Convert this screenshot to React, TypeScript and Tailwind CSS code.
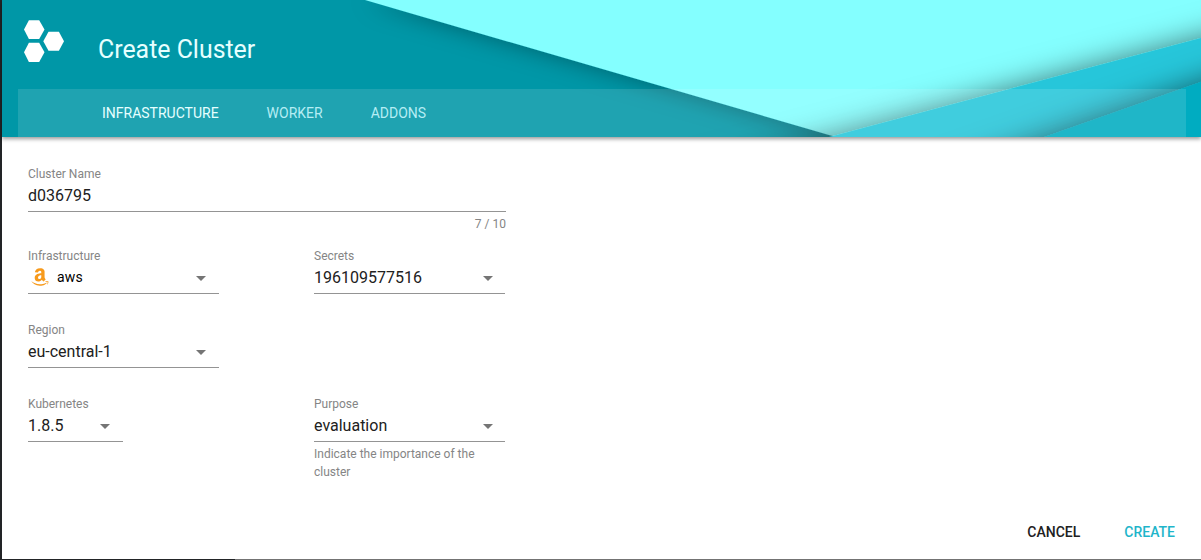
import React from "react";
import { FaAmazon } from "react-icons/fa";

function HeaderArt() {
  return (
    <svg className="absolute inset-0 h-full w-full" viewBox="2 0 1199 137" preserveAspectRatio="none" aria-hidden="true">
      <defs>
        <filter id="shade" filterUnits="userSpaceOnUse" x="200" y="-80" width="1300" height="440">
          <feDropShadow dx="0" dy="0" stdDeviation="15" floodColor="#000" floodOpacity="0.52" />
        </filter>
        <filter id="shadeSoft" filterUnits="userSpaceOnUse" x="200" y="-80" width="1300" height="440">
          <feDropShadow dx="0" dy="0" stdDeviation="12" floodColor="#000" floodOpacity="0.36" />
        </filter>
      </defs>
      <rect x="0" y="0" width="1201" height="137" fill="#0097a7" />
      <polygon points="365,0 1400,0 1400,301 1400,301" fill="#84ffff" filter="url(#shadeSoft)" />
      <polygon points="529,217 1400,-15 1400,300 529,300" fill="#26c6da" filter="url(#shade)" />
      <polygon points="843,208 1400,12 1400,300 843,300" fill="#00acc1" filter="url(#shade)" />
    </svg>
  );
}

function Logo() {
  return (
    <svg className="mt-5 ml-[22px] h-[43px] w-[41px] shrink-0" viewBox="0 0 41 43" fill="#fff" aria-hidden="true">
      <polygon points="4.9,0.2 15.2,0.2 20.5,9.6 15.2,19 4.9,19 0,9.6" />
      <polygon points="4.9,22.8 15.2,22.8 20.5,32.3 15.2,42 4.9,42 0,32.3" />
      <polygon points="24.5,11.7 34.9,11.7 40,21.2 34.9,30.8 24.5,30.8 19.3,21.2" />
    </svg>
  );
}

type FieldProps = {
  label: string;
  width: string;
  children: React.ReactNode;
  select?: boolean;
  caretMargin?: string;
};

function Field({ label, width, children, select = true, caretMargin = "mr-[13px]" }: FieldProps) {
  return (
    <div className={width}>
      <div className="h-[18px] text-[12px] leading-[18px] text-[#858585]">{label}</div>
      <div className="flex h-[29px] items-start justify-between border-b border-[#949494] text-[16px] leading-[26px] text-[#212121]">
        <span className="flex items-center">{children}</span>
        {select && (
          <svg className={`mt-[11px] h-[5px] w-[10px] ${caretMargin}`} viewBox="0 0 10 5" aria-hidden="true">
            <path d="M0 0h10L5 5z" fill="#757575" />
          </svg>
        )}
      </div>
    </div>
  );
}

export default function App() {
  return (
    <div className="flex h-[560px] w-[1201px] flex-col overflow-hidden bg-[#222426] pl-[2px] font-['Roboto',sans-serif]">
      <div className="flex h-[559px] flex-col bg-white">
        <header className="relative h-[137px] shrink-0 shadow-[0_2px_4px_rgba(0,0,0,0.4)]">
          <HeaderArt />
          <div className="relative flex h-full flex-col">
            <div className="flex h-[89px] items-start">
              <Logo />
              <h1 className="mt-[33px] ml-[33px] text-[24.9px] leading-[34px] font-normal text-[#e6ffff]">Create Cluster</h1>
            </div>
            <nav className="mr-[15px] ml-4 flex h-12 items-center gap-12 bg-white/12 pl-[84px] text-[14px] text-[#b5edf4]">
              <span className="text-[#e6ffff]">INFRASTRUCTURE</span>
              <span>WORKER</span>
              <span>ADDONS</span>
            </nav>
          </div>
        </header>

        <main className="flex flex-1 flex-col pt-7 pl-[26px]">
          <Field label="Cluster Name" width="w-[478px]" select={false}>d036795</Field>
          <div className="h-[35px] w-[478px] pt-[3px] text-right text-[12px] leading-[18px] text-[#858585]">7 / 10</div>
          <div className="flex h-[74px] gap-[95px]">
            <Field label="Infrastructure" width="w-[191px]">
              <FaAmazon className="mr-[7px] ml-[2px] -mt-[2px] h-5 w-5 text-[#f79a1c]" />
              <span className="-mt-px text-[14px] tracking-[0.2px] text-black">aws</span>
            </Field>
            <Field label="Secrets" width="w-[191px]" caretMargin="mr-[12px]">196109577516</Field>
          </div>
          <div className="h-[74px]">
            <Field label="Region" width="w-[191px]">eu-central-1</Field>
          </div>
          <div className="flex">
            <div className="w-[286px]">
              <Field label="Kubernetes" width="w-[95px]">1.8.5</Field>
            </div>
            <div className="w-[191px]">
              <Field label="Purpose" width="w-[191px]" caretMargin="mr-[12px]">evaluation</Field>
              <p className="pt-[3px] text-[12px] leading-[18px] text-[#858585]">Indicate the importance of the cluster</p>
            </div>
          </div>
        </main>

        <footer className="flex h-[54px] shrink-0 items-center justify-end gap-11 pr-[26px] text-[14px] font-medium">
          <button type="button" className="text-[#212121]">CANCEL</button>
          <button type="button" className="text-[#1fb5ca]">CREATE</button>
        </footer>
      </div>
      <div className="ml-[233px] h-px bg-[#737373]" />
    </div>
  );
}
